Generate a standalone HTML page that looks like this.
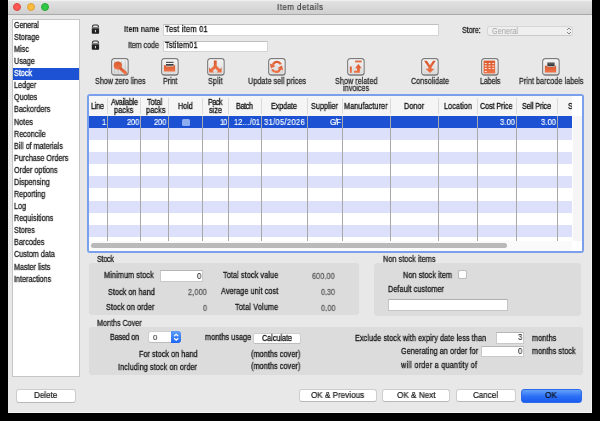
<!DOCTYPE html>
<html><head><meta charset="utf-8"><style>
html,body{margin:0;padding:0;width:600px;height:421px;overflow:hidden;background:#000;}
.t{position:absolute;white-space:nowrap;will-change:transform;font-family:"Liberation Sans",sans-serif;transform-origin:0 0;}
.r{position:absolute;box-sizing:border-box;}
svg{position:absolute;}
</style></head><body>
<div class="r" style="left:8px;top:0px;width:584px;height:413px;background:#e8e8e8;border-right:1px solid #f4f4f4;border-bottom:1px solid #f4f4f4;"></div>
<div class="r" style="left:8px;top:0px;width:584px;height:15px;background:linear-gradient(#f0f0f0 0,#f0f0f0 1px,#e2e2e2 1px,#cfcfcf 100%);border-bottom:1px solid #a9a9a9;"></div>
<div class="r" style="left:13.1px;top:3.1px;width:8.4px;height:8.4px;border-radius:50%;background:#fc5753;border:0.5px solid #df4744;"></div>
<div class="r" style="left:26.8px;top:3.1px;width:8.4px;height:8.4px;border-radius:50%;background:#fdbc40;border:0.5px solid #de9f34;"></div>
<div class="r" style="left:40.5px;top:3.1px;width:8.4px;height:8.4px;border-radius:50%;background:#33c748;border:0.5px solid #27aa35;"></div>
<div class="t" style="left:277.00px;top:3.40px;font-size:8.5px;line-height:8.5px;color:#404040;-webkit-text-stroke:0.2px #404040;letter-spacing:0.595px;transform:scaleX(0.920)">Item details</div>
<div class="r" style="left:12px;top:19px;width:68px;height:358px;background:#fff;border:1px solid #c6c6c6;"></div>
<div class="r" style="left:13px;top:68px;width:66px;height:12px;background:#1c52d3;"></div>
<div class="t" style="left:14.30px;top:20.90px;font-size:8.5px;line-height:8.5px;color:#222;-webkit-text-stroke:0.3px #222;letter-spacing:-0.188px;transform:scaleX(0.850)">General</div>
<div class="t" style="left:14.30px;top:32.98px;font-size:8.5px;line-height:8.5px;color:#222;-webkit-text-stroke:0.3px #222;letter-spacing:-0.017px;transform:scaleX(0.850)">Storage</div>
<div class="t" style="left:14.30px;top:45.06px;font-size:8.5px;line-height:8.5px;color:#222;-webkit-text-stroke:0.3px #222;letter-spacing:-0.011px;transform:scaleX(0.850)">Misc</div>
<div class="t" style="left:14.30px;top:57.14px;font-size:8.5px;line-height:8.5px;color:#222;-webkit-text-stroke:0.3px #222;letter-spacing:-0.010px;transform:scaleX(0.850)">Usage</div>
<div class="t" style="left:14.30px;top:69.22px;font-size:8.5px;line-height:8.5px;color:#fff;-webkit-text-stroke:0.3px #fff;letter-spacing:-0.018px;transform:scaleX(0.850)">Stock</div>
<div class="t" style="left:14.30px;top:81.30px;font-size:8.5px;line-height:8.5px;color:#222;-webkit-text-stroke:0.3px #222;letter-spacing:-0.017px;transform:scaleX(0.850)">Ledger</div>
<div class="t" style="left:14.30px;top:93.38px;font-size:8.5px;line-height:8.5px;color:#222;-webkit-text-stroke:0.3px #222;letter-spacing:-0.016px;transform:scaleX(0.850)">Quotes</div>
<div class="t" style="left:14.30px;top:105.46px;font-size:8.5px;line-height:8.5px;color:#222;-webkit-text-stroke:0.3px #222;letter-spacing:-0.019px;transform:scaleX(0.850)">Backorders</div>
<div class="t" style="left:14.30px;top:117.54px;font-size:8.5px;line-height:8.5px;color:#222;-webkit-text-stroke:0.3px #222;letter-spacing:-0.018px;transform:scaleX(0.850)">Notes</div>
<div class="t" style="left:14.30px;top:129.62px;font-size:8.5px;line-height:8.5px;color:#222;-webkit-text-stroke:0.3px #222;letter-spacing:-0.010px;transform:scaleX(0.850)">Reconcile</div>
<div class="t" style="left:14.30px;top:141.70px;font-size:8.5px;line-height:8.5px;color:#222;-webkit-text-stroke:0.3px #222;letter-spacing:-0.013px;transform:scaleX(0.850)">Bill of materials</div>
<div class="t" style="left:14.30px;top:153.78px;font-size:8.5px;line-height:8.5px;color:#222;-webkit-text-stroke:0.3px #222;letter-spacing:-0.017px;transform:scaleX(0.850)">Purchase Orders</div>
<div class="t" style="left:14.30px;top:165.86px;font-size:8.5px;line-height:8.5px;color:#222;-webkit-text-stroke:0.3px #222;letter-spacing:-0.017px;transform:scaleX(0.850)">Order options</div>
<div class="t" style="left:14.30px;top:177.94px;font-size:8.5px;line-height:8.5px;color:#222;-webkit-text-stroke:0.3px #222;letter-spacing:-0.013px;transform:scaleX(0.850)">Dispensing</div>
<div class="t" style="left:14.30px;top:190.02px;font-size:8.5px;line-height:8.5px;color:#222;-webkit-text-stroke:0.3px #222;letter-spacing:-0.014px;transform:scaleX(0.850)">Reporting</div>
<div class="t" style="left:14.30px;top:202.10px;font-size:8.5px;line-height:8.5px;color:#222;-webkit-text-stroke:0.3px #222;letter-spacing:-0.032px;transform:scaleX(0.850)">Log</div>
<div class="t" style="left:14.30px;top:214.18px;font-size:8.5px;line-height:8.5px;color:#222;-webkit-text-stroke:0.3px #222;letter-spacing:-0.012px;transform:scaleX(0.850)">Requisitions</div>
<div class="t" style="left:14.30px;top:226.26px;font-size:8.5px;line-height:8.5px;color:#222;-webkit-text-stroke:0.3px #222;letter-spacing:-0.018px;transform:scaleX(0.850)">Stores</div>
<div class="t" style="left:14.30px;top:238.34px;font-size:8.5px;line-height:8.5px;color:#222;-webkit-text-stroke:0.3px #222;letter-spacing:-0.016px;transform:scaleX(0.850)">Barcodes</div>
<div class="t" style="left:14.30px;top:250.42px;font-size:8.5px;line-height:8.5px;color:#222;-webkit-text-stroke:0.3px #222;letter-spacing:-0.018px;transform:scaleX(0.850)">Custom data</div>
<div class="t" style="left:14.30px;top:262.50px;font-size:8.5px;line-height:8.5px;color:#222;-webkit-text-stroke:0.3px #222;letter-spacing:-0.016px;transform:scaleX(0.850)">Master lists</div>
<div class="t" style="left:14.30px;top:274.58px;font-size:8.5px;line-height:8.5px;color:#222;-webkit-text-stroke:0.3px #222;letter-spacing:-0.015px;transform:scaleX(0.850)">Interactions</div>
<svg style="left:88px;top:22px" width="14" height="14" viewBox="0 0 14 14"><defs><linearGradient id="lk" x1="0" y1="0" x2="0" y2="1"><stop offset="0" stop-color="#9a9a9a"/><stop offset="0.22" stop-color="#555"/><stop offset="0.35" stop-color="#262626"/><stop offset="1" stop-color="#1e1e1e"/></linearGradient></defs><path d="M4.6 5.2V4.2Q4.6 3 5.8 3H9.1Q10.3 3 10.3 4.2V5.2" fill="none" stroke="#2a2a2a" stroke-width="1.1"/><rect x="3.8" y="4.9" width="7.3" height="6.9" rx="0.7" fill="url(#lk)"/><ellipse cx="7.45" cy="9.1" rx="0.55" ry="1.35" fill="#d8d8d8"/></svg>
<svg style="left:88px;top:38.4px" width="14" height="14" viewBox="0 0 14 14"><defs><linearGradient id="lk" x1="0" y1="0" x2="0" y2="1"><stop offset="0" stop-color="#9a9a9a"/><stop offset="0.22" stop-color="#555"/><stop offset="0.35" stop-color="#262626"/><stop offset="1" stop-color="#1e1e1e"/></linearGradient></defs><path d="M4.6 5.2V4.2Q4.6 3 5.8 3H9.1Q10.3 3 10.3 4.2V5.2" fill="none" stroke="#2a2a2a" stroke-width="1.1"/><rect x="3.8" y="4.9" width="7.3" height="6.9" rx="0.7" fill="url(#lk)"/><ellipse cx="7.45" cy="9.1" rx="0.55" ry="1.35" fill="#d8d8d8"/></svg>
<div class="t" style="left:123.70px;top:25.00px;font-size:8.5px;line-height:8.5px;font-weight:bold;color:#1a1a1a;-webkit-text-stroke:0.05px #1a1a1a;letter-spacing:0.125px;transform:scaleX(0.820)">Item name</div>
<div class="t" style="left:128.00px;top:41.00px;font-size:8.5px;line-height:8.5px;color:#333;-webkit-text-stroke:0.3px #333;letter-spacing:-0.110px;transform:scaleX(0.850)">Item code</div>
<div class="r" style="left:162.5px;top:24px;width:276px;height:11.5px;background:#fff;border:1px solid #d4d4d4;border-top-color:#c0c0c0;"></div>
<div class="r" style="left:162.5px;top:40.5px;width:105px;height:11px;background:#fff;border:1px solid #d4d4d4;border-top-color:#c0c0c0;"></div>
<div class="t" style="left:164.50px;top:25.00px;font-size:8.5px;line-height:8.5px;color:#111;-webkit-text-stroke:0.3px #111;letter-spacing:0.377px;transform:scaleX(0.850)">Test item 01</div>
<div class="t" style="left:164.50px;top:41.00px;font-size:8.5px;line-height:8.5px;color:#111;-webkit-text-stroke:0.3px #111;letter-spacing:0.236px;transform:scaleX(0.850)">Tstitem01</div>
<div class="t" style="left:461.70px;top:26.00px;font-size:8.5px;line-height:8.5px;color:#222;-webkit-text-stroke:0.3px #222;letter-spacing:-0.164px;transform:scaleX(0.850)">Store:</div>
<div class="r" style="left:487.3px;top:25.6px;width:85.4px;height:10.6px;background:#efefef;border:1px solid #d6d6d6;border-bottom-color:#cacaca;border-radius:3px;"></div>
<div class="t" style="left:492.00px;top:26.50px;font-size:8.5px;line-height:8.5px;color:#a8a8a8;-webkit-text-stroke:0.08px #a8a8a8;letter-spacing:0.056px;transform:scaleX(0.850)">General</div>
<svg style="left:566px;top:27px" width="6" height="8" viewBox="0 0 6 8"><path d="M1 3L3 1L5 3M1 5L3 7L5 5" fill="none" stroke="#777" stroke-width="0.9"/></svg>
<svg style="left:111px;top:58.4px" width="19" height="19" viewBox="0 0 19 19">
<defs><linearGradient id="g0" x1="0" y1="0" x2="0" y2="1"><stop offset="0" stop-color="#f4f4f4"/><stop offset="1" stop-color="#d6d6d6"/></linearGradient>
<linearGradient id="o0" x1="0" y1="0" x2="0" y2="1"><stop offset="0" stop-color="#d85a30"/><stop offset="1" stop-color="#f07448"/></linearGradient></defs>
<rect x="0.7" y="0.7" width="16.4" height="16.5" rx="2.6" fill="url(#g0)" stroke="#7c7c7c" stroke-width="1.2"/>
<path d="M2 16.6 H15.8" stroke="#4a4a4a" stroke-width="0.8" opacity="0.7"/><rect x="1.7" y="1.7" width="14.4" height="14.4" rx="1.6" fill="none" stroke="#fff" stroke-width="0.6" opacity="0.6"/>
<g stroke="#c4c4c4" stroke-width="0.9"><path d="M3.6 2.5v13M7.2 2.5v13M10.8 2.5v13M14.2 2.5v13"/></g><circle cx="6.85" cy="7.6" r="4.1" fill="url(#o0)"/><path d="M9.6 10.6L14.6 15" stroke="url(#o0)" stroke-width="3" stroke-linecap="round"/>
</svg>
<svg style="left:161.1px;top:58.4px" width="19" height="19" viewBox="0 0 19 19">
<defs><linearGradient id="g1" x1="0" y1="0" x2="0" y2="1"><stop offset="0" stop-color="#f4f4f4"/><stop offset="1" stop-color="#d6d6d6"/></linearGradient>
<linearGradient id="o1" x1="0" y1="0" x2="0" y2="1"><stop offset="0" stop-color="#d85a30"/><stop offset="1" stop-color="#f07448"/></linearGradient></defs>
<rect x="0.7" y="0.7" width="16.4" height="16.5" rx="2.6" fill="url(#g1)" stroke="#7c7c7c" stroke-width="1.2"/>
<path d="M2 16.6 H15.8" stroke="#4a4a4a" stroke-width="0.8" opacity="0.7"/><rect x="1.7" y="1.7" width="14.4" height="14.4" rx="1.6" fill="none" stroke="#fff" stroke-width="0.6" opacity="0.6"/>
<rect x="5" y="3.8" width="7.6" height="1.2" fill="#555"/><rect x="5" y="5" width="7.6" height="1.2" fill="#f4f4f4"/><rect x="5" y="6.2" width="7.6" height="1.4" fill="#1a1a1a"/><path d="M2.9 7.3H5V8.6H12.6V7.3H14.15V13.4H2.9Z" fill="url(#o1)"/>
</svg>
<svg style="left:207.1px;top:58.4px" width="19" height="19" viewBox="0 0 19 19">
<defs><linearGradient id="g2" x1="0" y1="0" x2="0" y2="1"><stop offset="0" stop-color="#f4f4f4"/><stop offset="1" stop-color="#d6d6d6"/></linearGradient>
<linearGradient id="o2" x1="0" y1="0" x2="0" y2="1"><stop offset="0" stop-color="#d85a30"/><stop offset="1" stop-color="#f07448"/></linearGradient></defs>
<rect x="0.7" y="0.7" width="16.4" height="16.5" rx="2.6" fill="url(#g2)" stroke="#7c7c7c" stroke-width="1.2"/>
<path d="M2 16.6 H15.8" stroke="#4a4a4a" stroke-width="0.8" opacity="0.7"/><rect x="1.7" y="1.7" width="14.4" height="14.4" rx="1.6" fill="none" stroke="#fff" stroke-width="0.6" opacity="0.6"/>
<path d="M8.25 2.6V8.4L4.2 12.6M8.25 8.4L12.3 12.6" stroke="url(#o2)" stroke-width="2.9" fill="none"/><path d="M2.1 9.4V14.4H7.1Z M14.6 9.4V14.4H9.6Z" fill="url(#o2)"/>
</svg>
<svg style="left:268.4px;top:58.4px" width="19" height="19" viewBox="0 0 19 19">
<defs><linearGradient id="g3" x1="0" y1="0" x2="0" y2="1"><stop offset="0" stop-color="#f4f4f4"/><stop offset="1" stop-color="#d6d6d6"/></linearGradient>
<linearGradient id="o3" x1="0" y1="0" x2="0" y2="1"><stop offset="0" stop-color="#d85a30"/><stop offset="1" stop-color="#f07448"/></linearGradient></defs>
<rect x="0.7" y="0.7" width="16.4" height="16.5" rx="2.6" fill="url(#g3)" stroke="#7c7c7c" stroke-width="1.2"/>
<path d="M2 16.6 H15.8" stroke="#4a4a4a" stroke-width="0.8" opacity="0.7"/><rect x="1.7" y="1.7" width="14.4" height="14.4" rx="1.6" fill="none" stroke="#fff" stroke-width="0.6" opacity="0.6"/>
<path d="M12.9 6.3Q10.9 3.3 7.6 4.1Q5.6 4.7 4.9 6.9" stroke="url(#o3)" stroke-width="2.3" fill="none"/><path d="M1.8 5.4L3 10.5L7.6 8Z" fill="url(#o3)"/><path d="M4.1 11.5Q6.1 14.6 9.4 13.8Q11.4 13.2 12.1 11" stroke="url(#o3)" stroke-width="2.3" fill="none"/><path d="M15.2 12.5L14 7.4L9.4 9.9Z" fill="url(#o3)"/>
</svg>
<svg style="left:347.1px;top:58.4px" width="19" height="19" viewBox="0 0 19 19">
<defs><linearGradient id="g4" x1="0" y1="0" x2="0" y2="1"><stop offset="0" stop-color="#f4f4f4"/><stop offset="1" stop-color="#d6d6d6"/></linearGradient>
<linearGradient id="o4" x1="0" y1="0" x2="0" y2="1"><stop offset="0" stop-color="#d85a30"/><stop offset="1" stop-color="#f07448"/></linearGradient></defs>
<rect x="0.7" y="0.7" width="16.4" height="16.5" rx="2.6" fill="url(#g4)" stroke="#7c7c7c" stroke-width="1.2"/>
<path d="M2 16.6 H15.8" stroke="#4a4a4a" stroke-width="0.8" opacity="0.7"/><rect x="1.7" y="1.7" width="14.4" height="14.4" rx="1.6" fill="none" stroke="#fff" stroke-width="0.6" opacity="0.6"/>
<rect x="8.1" y="2.6" width="6.6" height="1.8" fill="url(#o4)"/><path d="M11.4 6.1L14.7 10.15H12.85V14.85H7.1V12.8H10V10.15H8.1Z" fill="url(#o4)"/><rect x="2.9" y="8.6" width="1.85" height="6.25" fill="url(#o4)"/>
</svg>
<svg style="left:421.3px;top:58.4px" width="19" height="19" viewBox="0 0 19 19">
<defs><linearGradient id="g5" x1="0" y1="0" x2="0" y2="1"><stop offset="0" stop-color="#f4f4f4"/><stop offset="1" stop-color="#d6d6d6"/></linearGradient>
<linearGradient id="o5" x1="0" y1="0" x2="0" y2="1"><stop offset="0" stop-color="#d85a30"/><stop offset="1" stop-color="#f07448"/></linearGradient></defs>
<rect x="0.7" y="0.7" width="16.4" height="16.5" rx="2.6" fill="url(#g5)" stroke="#7c7c7c" stroke-width="1.2"/>
<path d="M2 16.6 H15.8" stroke="#4a4a4a" stroke-width="0.8" opacity="0.7"/><rect x="1.7" y="1.7" width="14.4" height="14.4" rx="1.6" fill="none" stroke="#fff" stroke-width="0.6" opacity="0.6"/>
<path d="M3 2.7H5.9L9 7.2L12 2.7H14.8L10.55 9.2V10.7H13.4L9 15.1L4.5 10.7H7.4V9.2Z" fill="url(#o5)"/>
</svg>
<svg style="left:481.4px;top:58.4px" width="19" height="19" viewBox="0 0 19 19">
<defs><linearGradient id="g6" x1="0" y1="0" x2="0" y2="1"><stop offset="0" stop-color="#f4f4f4"/><stop offset="1" stop-color="#d6d6d6"/></linearGradient>
<linearGradient id="o6" x1="0" y1="0" x2="0" y2="1"><stop offset="0" stop-color="#d85a30"/><stop offset="1" stop-color="#f07448"/></linearGradient></defs>
<rect x="0.7" y="0.7" width="16.4" height="16.5" rx="2.6" fill="url(#g6)" stroke="#7c7c7c" stroke-width="1.2"/>
<path d="M2 16.6 H15.8" stroke="#4a4a4a" stroke-width="0.8" opacity="0.7"/><rect x="1.7" y="1.7" width="14.4" height="14.4" rx="1.6" fill="none" stroke="#fff" stroke-width="0.6" opacity="0.6"/>
<rect x="2.6" y="2.6" width="11.5" height="12.8" fill="url(#o6)"/><g fill="#fff" opacity="0.92"><rect x="3.8" y="5" width="1.9" height="0.9"/><rect x="7.6" y="5" width="1.9" height="0.9"/><rect x="11.3" y="5" width="1.9" height="0.9"/><rect x="3.8" y="7.5" width="1.9" height="1.1"/><rect x="7.6" y="7.5" width="1.9" height="1.1"/><rect x="11.3" y="7.5" width="1.9" height="1.1"/><rect x="3.8" y="10.1" width="1.9" height="0.9"/><rect x="7.6" y="10.1" width="1.9" height="0.9"/><rect x="11.3" y="10.1" width="1.9" height="0.9"/><rect x="3.8" y="13" width="1.9" height="0.9"/></g>
</svg>
<svg style="left:542.1px;top:58.4px" width="19" height="19" viewBox="0 0 19 19">
<defs><linearGradient id="g7" x1="0" y1="0" x2="0" y2="1"><stop offset="0" stop-color="#f4f4f4"/><stop offset="1" stop-color="#d6d6d6"/></linearGradient>
<linearGradient id="o7" x1="0" y1="0" x2="0" y2="1"><stop offset="0" stop-color="#d85a30"/><stop offset="1" stop-color="#f07448"/></linearGradient></defs>
<rect x="0.7" y="0.7" width="16.4" height="16.5" rx="2.6" fill="url(#g7)" stroke="#7c7c7c" stroke-width="1.2"/>
<path d="M2 16.6 H15.8" stroke="#4a4a4a" stroke-width="0.8" opacity="0.7"/><rect x="1.7" y="1.7" width="14.4" height="14.4" rx="1.6" fill="none" stroke="#fff" stroke-width="0.6" opacity="0.6"/>
<defs><linearGradient id="bk" x1="0" y1="0" x2="0" y2="1"><stop offset="0" stop-color="#666"/><stop offset="1" stop-color="#2e2e2e"/></linearGradient></defs><rect x="5.3" y="4.4" width="7.3" height="3.9" fill="url(#bk)"/><path d="M2.9 7.8H5.3V9H12.6V7.8H14.15V14.6H2.9Z" fill="url(#o7)"/>
</svg>
<div class="t" style="left:95.00px;top:76.80px;font-size:8.5px;line-height:8.5px;color:#2a2a2a;-webkit-text-stroke:0.26px #2a2a2a;letter-spacing:-0.042px;transform:scaleX(0.850)">Show zero lines</div>
<div class="t" style="left:162.70px;top:76.80px;font-size:8.5px;line-height:8.5px;color:#2a2a2a;-webkit-text-stroke:0.26px #2a2a2a;letter-spacing:-0.169px;transform:scaleX(0.850)">Print</div>
<div class="t" style="left:208.00px;top:76.80px;font-size:8.5px;line-height:8.5px;color:#2a2a2a;-webkit-text-stroke:0.26px #2a2a2a;letter-spacing:0.127px;transform:scaleX(0.850)">Split</div>
<div class="t" style="left:247.50px;top:76.80px;font-size:8.5px;line-height:8.5px;color:#2a2a2a;-webkit-text-stroke:0.26px #2a2a2a;letter-spacing:0.040px;transform:scaleX(0.850)">Update sell prices</div>
<div class="t" style="left:334.50px;top:76.80px;font-size:8.5px;line-height:8.5px;color:#2a2a2a;-webkit-text-stroke:0.26px #2a2a2a;letter-spacing:0.036px;transform:scaleX(0.850)">Show related</div>
<div class="t" style="left:342.50px;top:83.80px;font-size:8.5px;line-height:8.5px;color:#2a2a2a;-webkit-text-stroke:0.26px #2a2a2a;letter-spacing:0.018px;transform:scaleX(0.850)">invoices</div>
<div class="t" style="left:411.00px;top:76.80px;font-size:8.5px;line-height:8.5px;color:#2a2a2a;-webkit-text-stroke:0.26px #2a2a2a;letter-spacing:-0.019px;transform:scaleX(0.850)">Consolidate</div>
<div class="t" style="left:480.00px;top:76.80px;font-size:8.5px;line-height:8.5px;color:#2a2a2a;-webkit-text-stroke:0.26px #2a2a2a;letter-spacing:-0.186px;transform:scaleX(0.850)">Labels</div>
<div class="t" style="left:518.50px;top:76.80px;font-size:8.5px;line-height:8.5px;color:#2a2a2a;-webkit-text-stroke:0.26px #2a2a2a;letter-spacing:0.039px;transform:scaleX(0.850)">Print barcode labels</div>
<div class="r" style="left:87px;top:93.6px;width:497px;height:159.4px;border:2.6px solid #7a9fec;border-radius:3px;background:#fff;"></div>
<div class="r" style="left:89.4px;top:96.2px;width:483.1px;height:19.5px;background:#f5f5f5;"></div>
<div class="r" style="left:89.4px;top:115.8px;width:483.1px;height:12.15px;background:#1b51d2;"></div>
<div class="r" style="left:89.4px;top:127.9px;width:483.1px;height:12.15px;background:#dce0fb;"></div>
<div class="r" style="left:89.4px;top:140.0px;width:483.1px;height:12.15px;background:#ffffff;"></div>
<div class="r" style="left:89.4px;top:152.1px;width:483.1px;height:12.15px;background:#dce0fb;"></div>
<div class="r" style="left:89.4px;top:164.2px;width:483.1px;height:12.15px;background:#ffffff;"></div>
<div class="r" style="left:89.4px;top:176.3px;width:483.1px;height:12.15px;background:#dce0fb;"></div>
<div class="r" style="left:89.4px;top:188.4px;width:483.1px;height:12.15px;background:#ffffff;"></div>
<div class="r" style="left:89.4px;top:200.5px;width:483.1px;height:12.15px;background:#dce0fb;"></div>
<div class="r" style="left:89.4px;top:212.6px;width:483.1px;height:12.15px;background:#ffffff;"></div>
<div class="r" style="left:89.4px;top:224.7px;width:483.1px;height:12.15px;background:#dce0fb;"></div>
<div class="r" style="left:89.4px;top:236.8px;width:483.1px;height:4.0px;background:#fff;"></div>
<div class="r" style="left:107px;top:97.5px;width:1px;height:16.5px;background:#dadada;"></div>
<div class="r" style="left:140px;top:97.5px;width:1px;height:16.5px;background:#dadada;"></div>
<div class="r" style="left:168px;top:97.5px;width:1px;height:16.5px;background:#dadada;"></div>
<div class="r" style="left:202px;top:97.5px;width:1px;height:16.5px;background:#dadada;"></div>
<div class="r" style="left:228px;top:97.5px;width:1px;height:16.5px;background:#dadada;"></div>
<div class="r" style="left:261px;top:97.5px;width:1px;height:16.5px;background:#dadada;"></div>
<div class="r" style="left:307px;top:97.5px;width:1px;height:16.5px;background:#dadada;"></div>
<div class="r" style="left:342px;top:97.5px;width:1px;height:16.5px;background:#dadada;"></div>
<div class="r" style="left:390px;top:97.5px;width:1px;height:16.5px;background:#dadada;"></div>
<div class="r" style="left:438px;top:97.5px;width:1px;height:16.5px;background:#dadada;"></div>
<div class="r" style="left:477px;top:97.5px;width:1px;height:16.5px;background:#dadada;"></div>
<div class="r" style="left:516px;top:97.5px;width:1px;height:16.5px;background:#dadada;"></div>
<div class="r" style="left:557px;top:97.5px;width:1px;height:16.5px;background:#dadada;"></div>
<div class="r" style="left:107px;top:115.8px;width:1px;height:125px;background:#a9a9a9;"></div>
<div class="r" style="left:140px;top:115.8px;width:1px;height:125px;background:#a9a9a9;"></div>
<div class="r" style="left:168px;top:115.8px;width:1px;height:125px;background:#a9a9a9;"></div>
<div class="r" style="left:202px;top:115.8px;width:1px;height:125px;background:#a9a9a9;"></div>
<div class="r" style="left:228px;top:115.8px;width:1px;height:125px;background:#a9a9a9;"></div>
<div class="r" style="left:261px;top:115.8px;width:1px;height:125px;background:#a9a9a9;"></div>
<div class="r" style="left:307px;top:115.8px;width:1px;height:125px;background:#a9a9a9;"></div>
<div class="r" style="left:342px;top:115.8px;width:1px;height:125px;background:#a9a9a9;"></div>
<div class="r" style="left:390px;top:115.8px;width:1px;height:125px;background:#a9a9a9;"></div>
<div class="r" style="left:438px;top:115.8px;width:1px;height:125px;background:#a9a9a9;"></div>
<div class="r" style="left:477px;top:115.8px;width:1px;height:125px;background:#a9a9a9;"></div>
<div class="r" style="left:516px;top:115.8px;width:1px;height:125px;background:#a9a9a9;"></div>
<div class="r" style="left:557px;top:115.8px;width:1px;height:125px;background:#a9a9a9;"></div>
<div class="r" style="left:89.4px;top:240.8px;width:483.1px;height:10px;background:#fafafa;"></div>
<div class="r" style="left:90.9px;top:242.6px;width:416.5px;height:5.4px;background:#b9b9b9;border-radius:2.7px;"></div>
<div class="r" style="left:572.5px;top:115.5px;width:9px;height:125.3px;background:#f5f5f5;"></div>
<div class="r" style="left:572.5px;top:96.2px;width:9px;height:19.3px;background:#fff;"></div>
<div class="r" style="left:572.5px;top:240.8px;width:9px;height:10px;background:#fff;"></div>
<div class="t" style="left:91.30px;top:101.80px;font-size:8.5px;line-height:8.5px;color:#111;-webkit-text-stroke:0.3px #111;letter-spacing:-0.252px;transform:scaleX(0.850)">Line</div>
<div class="t" style="left:110.60px;top:97.60px;font-size:8.5px;line-height:8.5px;color:#111;-webkit-text-stroke:0.3px #111;letter-spacing:-0.338px;transform:scaleX(0.850)">Available</div>
<div class="t" style="left:114.20px;top:105.80px;font-size:8.5px;line-height:8.5px;color:#111;-webkit-text-stroke:0.3px #111;letter-spacing:0.156px;transform:scaleX(0.850)">packs</div>
<div class="t" style="left:147.20px;top:97.60px;font-size:8.5px;line-height:8.5px;color:#111;-webkit-text-stroke:0.3px #111;letter-spacing:-0.046px;transform:scaleX(0.850)">Total</div>
<div class="t" style="left:145.50px;top:105.80px;font-size:8.5px;line-height:8.5px;color:#111;-webkit-text-stroke:0.3px #111;letter-spacing:0.185px;transform:scaleX(0.850)">packs</div>
<div class="t" style="left:178.00px;top:101.80px;font-size:8.5px;line-height:8.5px;color:#111;-webkit-text-stroke:0.3px #111;letter-spacing:-0.069px;transform:scaleX(0.850)">Hold</div>
<div class="t" style="left:207.80px;top:97.60px;font-size:8.5px;line-height:8.5px;color:#111;-webkit-text-stroke:0.3px #111;letter-spacing:-0.630px;transform:scaleX(0.850)">Pack</div>
<div class="t" style="left:208.60px;top:105.80px;font-size:8.5px;line-height:8.5px;color:#111;-webkit-text-stroke:0.3px #111;letter-spacing:0.025px;transform:scaleX(0.850)">size</div>
<div class="t" style="left:236.00px;top:101.80px;font-size:8.5px;line-height:8.5px;color:#111;-webkit-text-stroke:0.3px #111;letter-spacing:-0.438px;transform:scaleX(0.850)">Batch</div>
<div class="t" style="left:271.00px;top:101.80px;font-size:8.5px;line-height:8.5px;color:#111;-webkit-text-stroke:0.3px #111;letter-spacing:-0.102px;transform:scaleX(0.850)">Expdate</div>
<div class="t" style="left:310.60px;top:101.80px;font-size:8.5px;line-height:8.5px;color:#111;-webkit-text-stroke:0.3px #111;letter-spacing:0.047px;transform:scaleX(0.850)">Supplier</div>
<div class="t" style="left:344.00px;top:101.80px;font-size:8.5px;line-height:8.5px;color:#111;-webkit-text-stroke:0.3px #111;letter-spacing:0.109px;transform:scaleX(0.850)">Manufacturer</div>
<div class="t" style="left:404.00px;top:101.80px;font-size:8.5px;line-height:8.5px;color:#111;-webkit-text-stroke:0.3px #111;letter-spacing:0.095px;transform:scaleX(0.850)">Donor</div>
<div class="t" style="left:443.80px;top:101.80px;font-size:8.5px;line-height:8.5px;color:#111;-webkit-text-stroke:0.3px #111;letter-spacing:0.113px;transform:scaleX(0.850)">Location</div>
<div class="t" style="left:480.00px;top:101.80px;font-size:8.5px;line-height:8.5px;color:#111;-webkit-text-stroke:0.3px #111;letter-spacing:-0.107px;transform:scaleX(0.850)">Cost Price</div>
<div class="t" style="left:521.80px;top:101.80px;font-size:8.5px;line-height:8.5px;color:#111;-webkit-text-stroke:0.3px #111;letter-spacing:-0.198px;transform:scaleX(0.850)">Sell Price</div>
<div style="position:absolute;left:560px;top:96px;width:12.3px;height:19px;overflow:hidden">
<div class="t" style="left:7.90px;top:5.80px;font-size:8.5px;line-height:8.5px;color:#111;-webkit-text-stroke:0.3px #111;letter-spacing:0.262px;transform:scaleX(0.850)">Status</div>
</div>
<div class="t" style="left:101.82px;top:117.60px;font-size:8.5px;line-height:8.5px;color:#fff;-webkit-text-stroke:0.15px #fff;letter-spacing:0.000px;transform:scaleX(0.880)">1</div>
<div class="t" style="left:126.50px;top:117.60px;font-size:8.5px;line-height:8.5px;color:#fff;-webkit-text-stroke:0.15px #fff;letter-spacing:-0.111px;transform:scaleX(0.880)">200</div>
<div class="t" style="left:154.30px;top:117.60px;font-size:8.5px;line-height:8.5px;color:#fff;-webkit-text-stroke:0.15px #fff;letter-spacing:-0.111px;transform:scaleX(0.880)">200</div>
<div class="r" style="left:182px;top:118.7px;width:8px;height:7.8px;background:#8eaef0;border-radius:1.5px;"></div>
<div class="t" style="left:219.50px;top:117.60px;font-size:8.5px;line-height:8.5px;color:#fff;-webkit-text-stroke:0.15px #fff;letter-spacing:-1.268px;transform:scaleX(0.880)">10</div>
<div class="t" style="left:234.00px;top:117.60px;font-size:8.5px;line-height:8.5px;color:#fff;-webkit-text-stroke:0.15px #fff;letter-spacing:-0.041px;transform:scaleX(0.880)">12…/01</div>
<div class="t" style="left:264.40px;top:117.60px;font-size:8.5px;line-height:8.5px;color:#fff;-webkit-text-stroke:0.15px #fff;letter-spacing:0.398px;transform:scaleX(0.880)">31/05/2026</div>
<div class="t" style="left:330.00px;top:117.60px;font-size:8.5px;line-height:8.5px;color:#fff;-webkit-text-stroke:0.15px #fff;letter-spacing:-0.825px;transform:scaleX(0.880)">G/F</div>
<div class="t" style="left:499.50px;top:117.60px;font-size:8.5px;line-height:8.5px;color:#fff;-webkit-text-stroke:0.15px #fff;letter-spacing:0.165px;transform:scaleX(0.880)">3.00</div>
<div class="t" style="left:541.00px;top:117.60px;font-size:8.5px;line-height:8.5px;color:#fff;-webkit-text-stroke:0.15px #fff;letter-spacing:0.165px;transform:scaleX(0.880)">3.00</div>
<div class="t" style="left:96.70px;top:255.00px;font-size:8.5px;line-height:8.5px;color:#222;-webkit-text-stroke:0.3px #222;letter-spacing:-0.325px;transform:scaleX(0.850)">Stock</div>
<div class="r" style="left:88.5px;top:263.3px;width:270.5px;height:51.8px;background:#dcdcdc;border-radius:3px;"></div>
<div class="t" style="left:104.30px;top:271.30px;font-size:8.5px;line-height:8.5px;color:#161616;-webkit-text-stroke:0.3px #161616;letter-spacing:0.148px;transform:scaleX(0.850)">Minimum stock</div>
<div class="t" style="left:107.60px;top:287.50px;font-size:8.5px;line-height:8.5px;color:#161616;-webkit-text-stroke:0.3px #161616;letter-spacing:0.049px;transform:scaleX(0.850)">Stock on hand</div>
<div class="t" style="left:106.00px;top:303.30px;font-size:8.5px;line-height:8.5px;color:#161616;-webkit-text-stroke:0.3px #161616;letter-spacing:0.117px;transform:scaleX(0.850)">Stock on order</div>
<div class="r" style="left:160px;top:270.3px;width:42.7px;height:11.7px;background:#fff;border:1px solid #c9c9c9;border-top-color:#b5b5b5;"></div>
<div class="t" style="left:196.72px;top:271.80px;font-size:8.5px;line-height:8.5px;color:#222;-webkit-text-stroke:0.1px #222;letter-spacing:0.000px;transform:scaleX(0.900)">0</div>
<div class="t" style="left:188.00px;top:288.40px;font-size:8.5px;line-height:8.5px;color:#606060;-webkit-text-stroke:0.3px #606060;letter-spacing:0.187px;transform:scaleX(0.850)">2,000</div>
<div class="t" style="left:202.66px;top:304.00px;font-size:8.5px;line-height:8.5px;color:#606060;-webkit-text-stroke:0.3px #606060;letter-spacing:0.000px;transform:scaleX(0.850)">0</div>
<div class="t" style="left:223.00px;top:271.20px;font-size:8.5px;line-height:8.5px;color:#161616;-webkit-text-stroke:0.3px #161616;letter-spacing:0.131px;transform:scaleX(0.850)">Total stock value</div>
<div class="t" style="left:221.00px;top:287.20px;font-size:8.5px;line-height:8.5px;color:#161616;-webkit-text-stroke:0.3px #161616;letter-spacing:0.112px;transform:scaleX(0.850)">Average unit cost</div>
<div class="t" style="left:234.50px;top:302.70px;font-size:8.5px;line-height:8.5px;color:#161616;-webkit-text-stroke:0.3px #161616;letter-spacing:0.198px;transform:scaleX(0.850)">Total Volume</div>
<div class="t" style="left:312.30px;top:272.00px;font-size:8.5px;line-height:8.5px;color:#606060;-webkit-text-stroke:0.3px #606060;letter-spacing:0.141px;transform:scaleX(0.850)">600.00</div>
<div class="t" style="left:321.00px;top:288.00px;font-size:8.5px;line-height:8.5px;color:#606060;-webkit-text-stroke:0.3px #606060;letter-spacing:-0.026px;transform:scaleX(0.850)">0.30</div>
<div class="t" style="left:320.50px;top:303.50px;font-size:8.5px;line-height:8.5px;color:#606060;-webkit-text-stroke:0.3px #606060;letter-spacing:0.170px;transform:scaleX(0.850)">0.00</div>
<div class="t" style="left:382.60px;top:254.60px;font-size:8.5px;line-height:8.5px;color:#222;-webkit-text-stroke:0.3px #222;letter-spacing:0.086px;transform:scaleX(0.850)">Non stock items</div>
<div class="r" style="left:374px;top:263px;width:207px;height:53px;background:#dcdcdc;border-radius:3px;"></div>
<div class="t" style="left:403.00px;top:270.80px;font-size:8.5px;line-height:8.5px;color:#161616;-webkit-text-stroke:0.3px #161616;letter-spacing:0.111px;transform:scaleX(0.850)">Non stock item</div>
<div class="r" style="left:458.3px;top:270.3px;width:9.2px;height:9.2px;background:#fff;border:1px solid #bdbdbd;border-radius:2.2px;box-shadow:0 0 0.6px #bbb;"></div>
<div class="t" style="left:387.60px;top:285.20px;font-size:8.5px;line-height:8.5px;color:#161616;-webkit-text-stroke:0.3px #161616;letter-spacing:0.109px;transform:scaleX(0.850)">Default customer</div>
<div class="r" style="left:388px;top:299.2px;width:119.6px;height:11.6px;background:#fff;border:1px solid #c4c4c4;border-top-color:#b0b0b0;"></div>
<div class="t" style="left:97.40px;top:318.80px;font-size:8.5px;line-height:8.5px;color:#222;-webkit-text-stroke:0.3px #222;letter-spacing:-0.039px;transform:scaleX(0.850)">Months Cover</div>
<div class="r" style="left:89px;top:327.2px;width:493.8px;height:47.5px;background:#dcdcdc;border-radius:3px;"></div>
<div class="t" style="left:110.00px;top:332.80px;font-size:8.5px;line-height:8.5px;color:#161616;-webkit-text-stroke:0.3px #161616;letter-spacing:-0.255px;transform:scaleX(0.850)">Based on</div>
<div class="r" style="left:147.7px;top:331.3px;width:33.6px;height:12px;background:#fff;border:1px solid #cfcfcf;border-bottom-color:#bcbcbc;border-radius:3px;"></div>
<div class="r" style="left:171px;top:331.3px;width:10.3px;height:12px;background:linear-gradient(#5d9ef9,#1f66f2);border-radius:0 3px 3px 0;"></div>
<svg style="left:171px;top:331.3px" width="10" height="12" viewBox="0 0 10 12"><path d="M3.1 5.1L5.2 3.3L7.3 5.1M3.1 7.3L5.2 9.1L7.3 7.3" fill="none" stroke="#fff" stroke-width="1.25"/></svg>
<div class="t" style="left:153.07px;top:334.40px;font-size:8px;line-height:8px;color:#3a3a3a;-webkit-text-stroke:0.12px #3a3a3a;letter-spacing:0.000px;transform:scaleX(0.950)">0</div>
<div class="t" style="left:205.00px;top:333.00px;font-size:8.5px;line-height:8.5px;color:#161616;-webkit-text-stroke:0.3px #161616;letter-spacing:0.087px;transform:scaleX(0.850)">months usage</div>
<div class="r" style="left:253.3px;top:332.5px;width:48px;height:11.3px;background:#fff;border:1px solid #cfcfcf;border-bottom-color:#bdbdbd;border-radius:2.5px;"></div>
<div class="t" style="left:262.00px;top:333.60px;font-size:8.5px;line-height:8.5px;color:#111;-webkit-text-stroke:0.3px #111;letter-spacing:-0.019px;transform:scaleX(0.850)">Calculate</div>
<div class="t" style="left:138.60px;top:349.60px;font-size:8.5px;line-height:8.5px;color:#161616;-webkit-text-stroke:0.3px #161616;letter-spacing:0.041px;transform:scaleX(0.850)">For stock on hand</div>
<div class="t" style="left:118.00px;top:362.80px;font-size:8.5px;line-height:8.5px;color:#161616;-webkit-text-stroke:0.3px #161616;letter-spacing:0.117px;transform:scaleX(0.850)">Including stock on order</div>
<div class="t" style="left:251.20px;top:349.60px;font-size:8.5px;line-height:8.5px;color:#161616;-webkit-text-stroke:0.3px #161616;letter-spacing:0.100px;transform:scaleX(0.850)">(months cover)</div>
<div class="t" style="left:251.20px;top:362.00px;font-size:8.5px;line-height:8.5px;color:#161616;-webkit-text-stroke:0.3px #161616;letter-spacing:0.100px;transform:scaleX(0.850)">(months cover)</div>
<div class="t" style="left:355.40px;top:333.70px;font-size:8.5px;line-height:8.5px;color:#161616;-webkit-text-stroke:0.3px #161616;letter-spacing:0.102px;transform:scaleX(0.850)">Exclude stock with expiry date less than</div>
<div class="r" style="left:496.3px;top:332px;width:28.2px;height:11.8px;background:#fff;border:1px solid #c9c9c9;border-top-color:#b5b5b5;"></div>
<div class="t" style="left:518.43px;top:333.00px;font-size:8.5px;line-height:8.5px;color:#222;-webkit-text-stroke:0.1px #222;letter-spacing:0.000px;transform:scaleX(0.900)">3</div>
<div class="t" style="left:531.50px;top:333.60px;font-size:8.5px;line-height:8.5px;color:#161616;-webkit-text-stroke:0.3px #161616;letter-spacing:0.148px;transform:scaleX(0.850)">months</div>
<div class="t" style="left:400.60px;top:346.80px;font-size:8.5px;line-height:8.5px;color:#161616;-webkit-text-stroke:0.3px #161616;letter-spacing:0.102px;transform:scaleX(0.850)">Generating an order for</div>
<div class="r" style="left:481.4px;top:345.7px;width:43.1px;height:11.6px;background:#fff;border:1px solid #c9c9c9;border-top-color:#b5b5b5;"></div>
<div class="t" style="left:518.43px;top:347.00px;font-size:8.5px;line-height:8.5px;color:#222;-webkit-text-stroke:0.1px #222;letter-spacing:0.000px;transform:scaleX(0.900)">0</div>
<div class="t" style="left:531.50px;top:346.60px;font-size:8.5px;line-height:8.5px;color:#161616;-webkit-text-stroke:0.3px #161616;letter-spacing:0.115px;transform:scaleX(0.850)">months stock</div>
<div class="t" style="left:401.44px;top:361.30px;font-size:8.5px;line-height:8.5px;color:#161616;-webkit-text-stroke:0.3px #161616;letter-spacing:0.295px;transform:scaleX(0.850)">will order a quantity of</div>
<div class="r" style="left:15.8px;top:388.7px;width:60px;height:14px;background:#fff;border:1px solid #cdcdcd;border-bottom-color:#b8b8b8;border-radius:3px;"></div>
<div class="t" style="left:34.20px;top:391.00px;font-size:8.5px;line-height:8.5px;color:#151515;-webkit-text-stroke:0.2px #151515;letter-spacing:-0.005px;transform:scaleX(0.950)">Delete</div>
<div class="r" style="left:299.3px;top:388.6px;width:77.4px;height:13.6px;background:#fff;border:1px solid #cdcdcd;border-bottom-color:#b8b8b8;border-radius:3px;"></div>
<div class="t" style="left:310.90px;top:391.00px;font-size:8.5px;line-height:8.5px;color:#151515;-webkit-text-stroke:0.2px #151515;letter-spacing:0.012px;transform:scaleX(0.950)">OK &amp; Previous</div>
<div class="r" style="left:382px;top:388.6px;width:68px;height:13.6px;background:#fff;border:1px solid #cdcdcd;border-bottom-color:#b8b8b8;border-radius:3px;"></div>
<div class="t" style="left:396.70px;top:391.00px;font-size:8.5px;line-height:8.5px;color:#151515;-webkit-text-stroke:0.2px #151515;letter-spacing:0.060px;transform:scaleX(0.950)">OK &amp; Next</div>
<div class="r" style="left:456.3px;top:388.7px;width:59.5px;height:13.8px;background:#fff;border:1px solid #cdcdcd;border-bottom-color:#b8b8b8;border-radius:3px;"></div>
<div class="t" style="left:473.00px;top:391.00px;font-size:8.5px;line-height:8.5px;color:#151515;-webkit-text-stroke:0.2px #151515;letter-spacing:-0.027px;transform:scaleX(0.950)">Cancel</div>
<div class="r" style="left:521.3px;top:388.6px;width:60.5px;height:14px;background:linear-gradient(#63a2fa,#2a6ef5 55%,#1c5cf0);border:1px solid #2d6ae8;border-radius:3px;"></div>
<div class="t" style="left:545.00px;top:391.00px;font-size:8.5px;line-height:8.5px;color:#0a0a0a;-webkit-text-stroke:0.2px #0a0a0a;letter-spacing:0.121px;transform:scaleX(0.950)">OK</div>
</body></html>
